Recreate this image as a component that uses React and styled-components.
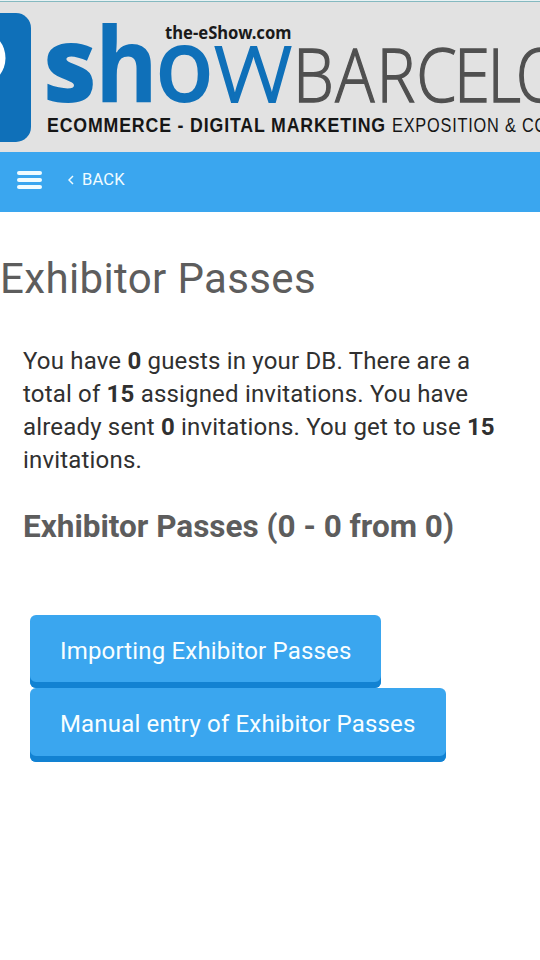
import React from "react";
import styled, { createGlobalStyle } from "styled-components";

const GlobalStyle = createGlobalStyle`
  body {
    margin: 0;
    background: #ffffff;
    font-family: Roboto, sans-serif;
    overflow-x: hidden;
  }
`;

const Page = styled.div`
  display: flex;
  flex-direction: column;
  width: 540px;
  min-height: 960px;
  overflow: hidden;
`;

const Banner = styled.header`
  height: 152px;
  background: #e2e2e2;
  overflow: hidden;
`;

const BannerArt = styled.svg`
  display: block;
`;

const BrandLetter = styled.text`
  font-family: "Open Sans", sans-serif;
  font-size: 104px;
  font-weight: ${(p) => p.$weight};
  fill: #0f70b9;
  stroke: #0f70b9;
  stroke-width: ${(p) => p.$stroke || 0}px;
`;

const City = styled.text`
  font-family: "Open Sans", sans-serif;
  font-size: 74px;
  font-weight: 300;
  fill: #505050;
  stroke: #505050;
  stroke-width: 1.4px;
`;

const Site = styled.text`
  font-family: "Noto Sans", sans-serif;
  font-size: 17.5px;
  font-weight: 700;
  fill: #1a1a1a;
`;

const Tagline = styled.text`
  font-family: "Liberation Sans", sans-serif;
  font-size: 21px;
  font-weight: ${(p) => p.$weight};
  letter-spacing: 1px;
  fill: #161616;
`;

const Toolbar = styled.nav`
  display: flex;
  align-items: center;
  box-sizing: border-box;
  height: 60px;
  padding: 0 17px 5px;
  background: #3aa6ef;
  color: #f0fcff;
`;

const MenuButton = styled.button`
  display: flex;
  flex-direction: column;
  gap: 3px;
  width: 25px;
  padding: 0;
  border: none;
  background: transparent;
`;

const MenuBar = styled.span`
  height: 4px;
  border-radius: 2px;
  background: #f0fcff;
`;

const BackLink = styled.a`
  display: flex;
  align-items: center;
  gap: 8px;
  margin-left: 26px;
  font-size: 16.5px;
  line-height: 20px;
  letter-spacing: 0.2px;
`;

const Title = styled.h1`
  margin: 42px 0 0;
  color: #5d5d5d;
  font-size: 42px;
  font-weight: 400;
  line-height: 50px;
  letter-spacing: 0.36px;
  white-space: nowrap;
`;

const Content = styled.main`
  padding: 41px 23px 0;
`;

const Summary = styled.p`
  margin: 0;
  color: #303030;
  font-size: 24px;
  line-height: 33px;
  letter-spacing: 0.18px;
  white-space: nowrap;
`;

const Subtitle = styled.h2`
  margin: 30px 0 0;
  color: #5d5d5d;
  font-size: 31.5px;
  font-weight: 700;
  line-height: 40px;
  white-space: nowrap;
`;

const Actions = styled.div`
  display: flex;
  flex-direction: column;
  align-items: flex-start;
  margin: 68px 0 0 7px;
`;

const ActionButton = styled.button`
  box-sizing: border-box;
  width: ${(p) => p.$width}px;
  height: ${(p) => p.$height}px;
  padding: 0 0 2px 30px;
  border: none;
  border-radius: 6px;
  background: #3aa6ef;
  box-shadow: inset 0 -6px 0 #1282d2;
  color: #f8feff;
  font-family: inherit;
  font-size: 24px;
  line-height: 70px;
  letter-spacing: 0.17px;
  text-align: left;
  white-space: nowrap;
`;

// every letter of the wordmark is lighter than the one before it
const brand = [
  { letter: "s", x: 43, weight: 800, width: 54 },
  { letter: "h", x: 95, weight: 700, width: 63 },
  { letter: "o", x: 155, weight: 600, width: 59 },
  { letter: "w", x: 214, weight: 300, width: 78, stroke: 1.8 },
];

const EshowBanner = () => (
  <Banner>
    <BannerArt width="540" height="152" viewBox="0 0 540 152">
      <rect width="540" height="1" fill="#e8f2f4" />
      <rect y="1" width="540" height="1" fill="#85b9c0" />
      <rect x="-60" y="13" width="91" height="129" rx="15" fill="#0f70b9" />
      <ellipse cx="-16" cy="58" rx="21.5" ry="25" fill="#ffffff" />
      <Site x="165" y="39" textLength="126.5" lengthAdjust="spacingAndGlyphs">
        the-eShow.com
      </Site>
      {brand.map((b) => (
        <BrandLetter
          key={b.letter}
          x={b.x}
          y="102"
          $weight={b.weight}
          $stroke={b.stroke}
          textLength={b.width}
          lengthAdjust="spacingAndGlyphs"
        >
          {b.letter}
        </BrandLetter>
      ))}
      <City transform="translate(293 101.5) scale(0.88 1)" x="0 48 95 140 183 221 253 310 358">
        BARCELONA
      </City>
      <Tagline x="47" y="132" $weight={700} textLength="339" lengthAdjust="spacingAndGlyphs">
        ECOMMERCE - DIGITAL MARKETING
      </Tagline>
      <Tagline x="392" y="132" $weight={400} textLength="252" lengthAdjust="spacingAndGlyphs">
        EXPOSITION &amp; CONFERENCE
      </Tagline>
    </BannerArt>
  </Banner>
);

const App = () => {
  return (
    <Page>
      <GlobalStyle />
      <EshowBanner />
      <Toolbar>
        <MenuButton aria-label="Menu">
          <MenuBar />
          <MenuBar />
          <MenuBar />
        </MenuButton>
        <BackLink>
          <svg width="6" height="10" viewBox="0 0 6 10" fill="none" stroke="currentColor" strokeWidth="1.5">
            <path d="M5 1 L1 5 L5 9" />
          </svg>
          BACK
        </BackLink>
      </Toolbar>
      <Title>Exhibitor Passes</Title>
      <Content>
        <Summary>
          You have <b>0</b> guests in your DB. There are a<br />
          total of <b>15</b> assigned invitations. You have<br />
          already sent <b>0</b> invitations. You get to use <b>15</b><br />
          invitations.
        </Summary>
        <Subtitle>Exhibitor Passes (0 - 0 from 0)</Subtitle>
        <Actions>
          <ActionButton $width={351} $height={73}>Importing Exhibitor Passes</ActionButton>
          <ActionButton $width={416} $height={74}>Manual entry of Exhibitor Passes</ActionButton>
        </Actions>
      </Content>
    </Page>
  );
};

export default App;
